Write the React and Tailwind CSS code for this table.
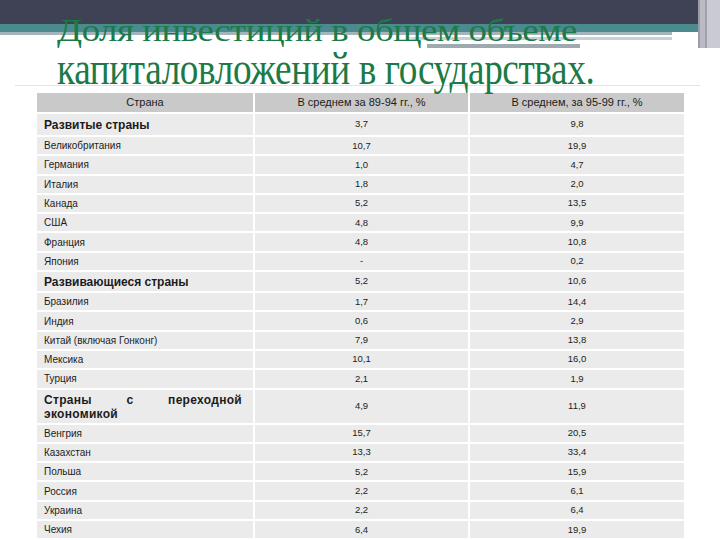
import React from "react";

const rows = [
    { name: "Развитые страны", a: "3,7", b: "9,8", cat: true, h: "h-[21px]" },
    { name: "Великобритания", a: "10,7", b: "19,9" },
    { name: "Германия", a: "1,0", b: "4,7" },
    { name: "Италия", a: "1,8", b: "2,0" },
    { name: "Канада", a: "5,2", b: "13,5" },
    { name: "США", a: "4,8", b: "9,9" },
    { name: "Франция", a: "4,8", b: "10,8" },
    { name: "Япония", a: "-", b: "0,2" },
    { name: "Развивающиеся страны", a: "5,2", b: "10,6", cat: true, h: "h-[19px]" },
    { name: "Бразилия", a: "1,7", b: "14,4" },
    { name: "Индия", a: "0,6", b: "2,9" },
    { name: "Китай (включая Гонконг)", a: "7,9", b: "13,8" },
    { name: "Мексика", a: "10,1", b: "16,0" },
    { name: "Турция", a: "2,1", b: "1,9" },
    { name: "Страны с переходной экономикой", a: "4,9", b: "11,9", cat: true, double: true, h: "h-[33px]" },
    { name: "Венгрия", a: "15,7", b: "20,5" },
    { name: "Казахстан", a: "13,3", b: "33,4" },
    { name: "Польша", a: "5,2", b: "15,9" },
    { name: "Россия", a: "2,2", b: "6,1" },
    { name: "Украина", a: "2,2", b: "6,4" },
    { name: "Чехия", a: "6,4", b: "19,9" },
];

const Row = ({ row }) => {
    const h = row.h || "h-[17.3px]";
    return (
        <>
            <div className={`${h} bg-[#ebebeb] pl-[7px] pr-[11px] flex items-center`}>
                {row.double
                    ? <div className="text-[12px] font-bold leading-[14px] text-justify tracking-[0.3px] pt-[1px]">Страны с переходной экономикой</div>
                    : <div className={row.cat ? "text-[12px] font-bold" : "text-[10px]"}>{row.name}</div>}
            </div>
            <div className={`${h} bg-[#ebebeb] flex items-center justify-center text-[9.5px]`}>{row.a}</div>
            <div className={`${h} bg-[#ebebeb] flex items-center justify-center text-[9.5px]`}>{row.b}</div>
        </>
    )
}

const App = () => {
    return (
        <div className="w-[720px] h-[540px] bg-white overflow-hidden relative" style={{ fontFamily: '"Liberation Sans", Arial, sans-serif' }}>
            {/* slide decoration bands */}
            <div className="flex h-[50px]">
                <div className="w-[698px] flex flex-col">
                    <div className="h-[24px] bg-[#3f4254]"></div>
                    <div className="h-[8px] bg-[#4b8a8e]"></div>
                    <div className="h-[3px] w-[672px] bg-[#a4b4bb]"></div>
                    <div className="h-[2px]"></div>
                    <div className="h-[3px] w-[672px] bg-[linear-gradient(90deg,#ffffff_60%,#c7d1d5_62%)]"></div>
                    <div className="h-[4px]"></div>
                    <div className="h-[4px] ml-[427px] w-[153px] bg-[#9eaab0]"></div>
                </div>
                <div className="flex-1 flex h-[48px]">
                    <div className="w-[2px] bg-[#9b9ca6]"></div>
                    <div className="w-[5px] bg-[#b9bac3]"></div>
                    <div className="w-[2px] bg-[#9fa0aa]"></div>
                    <div className="flex-1 bg-[#c9cad2]"></div>
                </div>
            </div>

            {/* title */}
            <div className="absolute left-[57px] top-[8px] text-[#1b7a46] whitespace-nowrap" style={{ fontFamily: '"Liberation Serif", "Times New Roman", serif' }}>
                <div className="text-[40px] leading-[38px] origin-bottom-left scale-y-[0.8] scale-x-[0.92] tracking-[-0.5px]">Доля инвестиций в общем объеме</div>
                <div className="text-[46px] leading-[46px] origin-left scale-x-[0.81] tracking-[-0.5px]">капиталовложений в государствах.</div>
            </div>
            <div className="h-[1px] ml-[15px] w-[685px] bg-[#e4e4e4] mt-[35px]"></div>

            {/* table */}
            <div className="ml-[37px] mt-[7px] grid grid-cols-[216px_213px_214px] gap-[2px] text-[#1c1c1c]">
                <div className="h-[19px] bg-[#c9c9c9] flex items-center justify-center text-[11px]">Страна</div>
                <div className="h-[19px] bg-[#c9c9c9] flex items-center justify-center text-[11px]">В среднем за 89-94 гг., %</div>
                <div className="h-[19px] bg-[#c9c9c9] flex items-center justify-center text-[11px]">В среднем, за 95-99 гг., %</div>
                {rows.map((row, i) => <Row key={i} row={row} />)}
            </div>
        </div>
    )
}
export default App;
